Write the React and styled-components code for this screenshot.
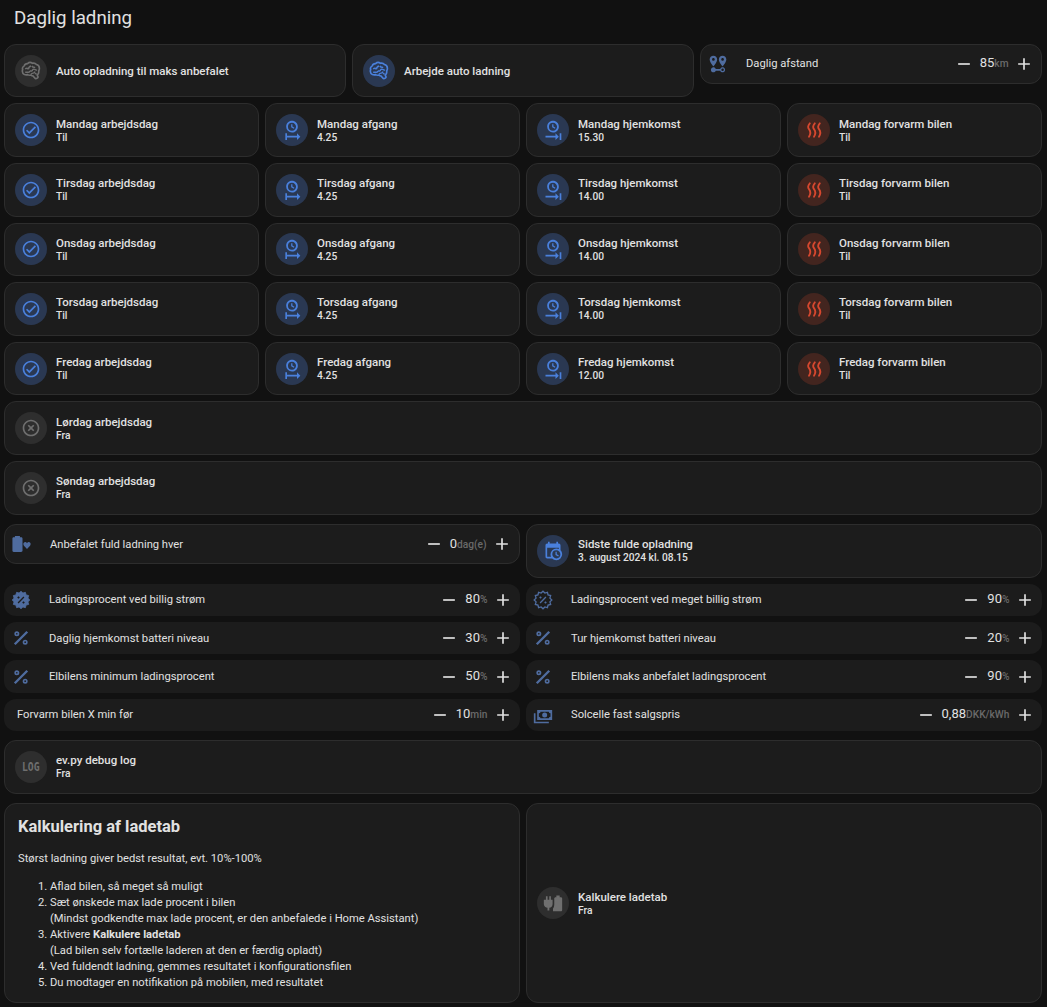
import React from 'react';
import styled, { createGlobalStyle } from 'styled-components';

const Global = createGlobalStyle`
  html, body { margin: 0; padding: 0; background: #111111; }
  body { font-family: Roboto, "Liberation Sans", sans-serif; color: #e1e1e1; }
`;

const P = {
  check: 'M12 2C6.5 2 2 6.5 2 12S6.5 22 12 22 22 17.5 22 12 17.5 2 12 2M12 20C7.59 20 4 16.41 4 12S7.59 4 12 4 20 7.59 20 12 16.41 20 12 20M16.59 7.58L10 14.17L7.41 11.59L6 13L10 17L18 9L16.59 7.58Z',
  close: 'M12,20C7.59,20 4,16.41 4,12C4,7.59 7.59,4 12,4C16.41,4 20,7.59 20,12C20,16.41 16.41,20 12,20M12,2C6.47,2 2,6.47 2,12C2,17.53 6.47,22 12,22C17.53,22 22,17.53 22,12C22,6.47 17.53,2 12,2M14.59,8L12,10.59L9.41,8L8,9.41L10.59,12L8,14.59L9.41,16L12,13.41L14.59,16L16,14.59L13.41,12L16,9.41L14.59,8Z',
  percent: 'M18.5,3.5L3.5,18.5L5.5,20.5L20.5,5.5M7,4A3,3 0 0,0 4,7A3,3 0 0,0 7,10A3,3 0 0,0 10,7A3,3 0 0,0 7,4M7,6A1,1 0 0,1 8,7A1,1 0 0,1 7,8A1,1 0 0,1 6,7A1,1 0 0,1 7,6M17,14A3,3 0 0,0 14,17A3,3 0 0,0 17,20A3,3 0 0,0 20,17A3,3 0 0,0 17,14M17,16A1,1 0 0,1 18,17A1,1 0 0,1 17,18A1,1 0 0,1 16,17A1,1 0 0,1 17,16Z',
  minus: 'M19,13H5V11H19V13Z',
  plus: 'M19,13H13V19H11V13H5V11H11V5H13V11H19V13Z',
  clockStart: 'M12,1C8.14,1 5,4.14 5,8A7,7 0 0,0 12,15C15.86,15 19,11.87 19,8C19,4.14 15.86,1 12,1M12,3.15C14.67,3.15 16.85,5.32 16.85,8C16.85,10.68 14.67,12.85 12,12.85A4.85,4.85 0 0,1 7.15,8A4.85,4.85 0 0,1 12,3.15M11,5V8.69L14.19,10.53L14.94,9.23L12.5,7.82V5M4,16V24H6V21H18V24L22,20L18,16V19H6V16',
  clockEnd: 'M12,1C8.14,1 5,4.14 5,8A7,7 0 0,0 12,15C15.86,15 19,11.87 19,8C19,4.14 15.86,1 12,1M12,3.15C14.67,3.15 16.85,5.32 16.85,8C16.85,10.68 14.67,12.85 12,12.85A4.85,4.85 0 0,1 7.15,8A4.85,4.85 0 0,1 12,3.15M11,5V8.69L14.19,10.53L14.94,9.23L12.5,7.82V5M15,16V19H3V21H15V24L19,20M20,16V24H22V16',
  calendar: 'M15,13H16.5V15.82L18.94,17.23L18.19,18.53L15,16.69V13M19,8H5V19H9.67C9.24,18.09 9,17.07 9,16A7,7 0 0,1 16,9C17.07,9 18.09,9.24 19,9.67V8M5,21C3.89,21 3,20.1 3,19V5C3,3.89 3.89,3 5,3H6V1H8V3H16V1H18V3H19A2,2 0 0,1 21,5V11.1C22.24,12.36 23,14.09 23,16A7,7 0 0,1 16,23C14.09,23 12.36,22.24 11.1,21H5M16,11.15A4.85,4.85 0 0,0 11.15,16C11.15,18.68 13.32,20.85 16,20.85A4.85,4.85 0 0,0 20.85,16C20.85,13.32 18.68,11.15 16,11.15Z',
  distance: 'M6.5,8.11C5.61,8.11 4.89,7.39 4.89,6.5A1.61,1.61 0 0,1 6.5,4.89C7.39,4.89 8.11,5.61 8.11,6.5V6.5A1.61,1.61 0 0,1 6.5,8.11M6.5,2C4,2 2,4 2,6.5C2,9.87 6.5,14.86 6.5,14.86C6.5,14.86 11,9.87 11,6.5C11,4 9,2 6.5,2M17.5,8.11A1.61,1.61 0 0,1 15.89,6.5C15.89,5.61 16.61,4.89 17.5,4.89C18.39,4.89 19.11,5.61 19.11,6.5A1.61,1.61 0 0,1 17.5,8.11M17.5,2C15,2 13,4 13,6.5C13,9.87 17.5,14.86 17.5,14.86C17.5,14.86 22,9.87 22,6.5C22,4 20,2 17.5,2M17.5,16C16.23,16 15.1,16.8 14.68,18H9.32C8.77,16.44 7.05,15.62 5.5,16.17C3.93,16.72 3.11,18.44 3.66,20C4.22,21.56 5.93,22.38 7.5,21.83C8.35,21.53 9,20.85 9.32,20H14.69C15.24,21.56 16.96,22.38 18.5,21.83C20.08,21.28 20.9,19.56 20.35,18C19.92,16.8 18.78,16 17.5,16M17.5,20.5A1.5,1.5 0 0,1 16,19A1.5,1.5 0 0,1 17.5,17.5A1.5,1.5 0 0,1 19,19A1.5,1.5 0 0,1 17.5,20.5Z',
  cash: 'M5,6H23V18H5V6M14,9A3,3 0 0,1 17,12A3,3 0 0,1 14,15A3,3 0 0,1 11,12A3,3 0 0,1 14,9M9,8A2,2 0 0,1 7,10V14A2,2 0 0,1 9,16H19A2,2 0 0,1 21,14V10A2,2 0 0,1 19,8H9M1,10H3V20H19V22H1V10Z',
};

const Svg = styled.svg`
  display: block;
  flex: none;
  width: ${p => p.$size || 20}px;
  height: ${p => p.$size || 20}px;
  fill: currentColor;
`;

const Mdi = ({ d, size }) => <Svg viewBox="0 0 24 24" $size={size}><path d={d} /></Svg>;

const Brain = () => (
  <Svg viewBox="0 0 24 24">
    <path fill="none" stroke="currentColor" strokeWidth="2" d="M21.33,12.91C21.42,14.46 20.71,15.95 19.44,16.86L20.21,18.35C20.44,18.8 20.47,19.33 20.27,19.8C20.08,20.27 19.69,20.64 19.21,20.8L18.42,21.05C18.25,21.11 18.06,21.14 17.88,21.14C17.37,21.14 16.89,20.91 16.56,20.5L14.44,18C13.55,17.85 12.71,17.47 12,16.9C11.5,17.05 11,17.13 10.5,17.13C9.62,17.13 8.74,16.86 8,16.34C7.47,16.5 6.93,16.57 6.38,16.56C5.59,16.57 4.81,16.41 4.08,16.11C2.65,15.47 1.7,14.07 1.65,12.5C1.57,11.78 1.69,11.05 2,10.39C1.71,9.64 1.68,8.82 1.93,8.06C2.3,7.11 3,6.32 3.87,5.82C4.45,4.13 6.08,3 7.87,3.12C9.47,1.62 11.92,1.46 13.7,2.75C14.12,2.64 14.56,2.58 15,2.58C16.36,2.55 17.65,3.15 18.5,4.22C20.54,4.75 22,6.57 22.08,8.69C22.13,9.8 21.83,10.89 21.22,11.82C21.29,12.18 21.33,12.54 21.33,12.91Z" />
    <path fill="none" stroke="currentColor" strokeWidth="1.7" d="M5,9.5C6.5,8.5 8,8.5 9,10M9,10C9,8 10,6.5 12,6M5,13.5H9C10,13.5 10.5,13 10.5,12M10.5,12H13.5M13,6C14,7.5 15,8 17,7.5M13.5,12C13.5,10 15,9.5 16.5,10M16.5,10C18,10.5 18.5,11 19,11.5M12,16C12.5,15 13,14.5 14.5,14.5C16,14.5 16.5,13.5 16.5,12.5M17,14.5L18.5,16" />
  </Svg>
);

const Heat = () => (
  <Svg viewBox="0 0 24 24">
    <path fill="none" stroke="currentColor" strokeWidth="2.2" strokeLinecap="round" d="M7,4C4.4,7 4.4,9 6,11C8.2,13.8 8.2,16.5 6,20M13,4C10.4,7 10.4,9 12,11C14.2,13.8 14.2,16.5 12,20M19,4C16.4,7 16.4,9 18,11C20.2,13.8 20.2,16.5 18,20" />
  </Svg>
);

const badge = (() => {
  const pts = [];
  const n = 12;
  for (let i = 0; i < n * 2; i++) {
    const a = (Math.PI * i) / n - Math.PI / 2;
    const r = i % 2 ? 8.6 : 10.6;
    pts.push(`${(12 + r * Math.cos(a)).toFixed(2)},${(12 + r * Math.sin(a)).toFixed(2)}`);
  }
  return pts.join(' ');
})();

const Sale = ({ outline }) => (
  <Svg viewBox="0 0 24 24">
    <polygon points={badge} fill={outline ? 'none' : 'currentColor'} stroke="currentColor" strokeWidth={outline ? 1.6 : 1} />
    <g stroke={outline ? 'currentColor' : '#1c1c1c'} fill={outline ? 'currentColor' : '#1c1c1c'}>
      <path strokeWidth="1.6" d="M8.5,15.5L15.5,8.5" fill="none" />
      <circle cx="9" cy="9" r="1" strokeWidth="0.6" />
      <circle cx="15" cy="15" r="1" strokeWidth="0.6" />
    </g>
  </Svg>
);

const BatteryHeart = () => (
  <Svg viewBox="0 0 24 24">
    <path d="M3.5,2.4H9.5V4H11C11.8,4 12.6,4.7 12.6,5.5V20.2C12.6,21 11.8,21.6 11,21.6H2C1.2,21.6 0.5,21 0.5,20.2V5.5C0.5,4.7 1.2,4 2,4H3.5Z" />
    <path d="M18,18L14.3,14C13,12.4 13.6,9.9 15.7,9.7C16.6,9.6 17.5,10.1 18,11C18.5,10.1 19.4,9.6 20.3,9.7C22.4,9.9 23,12.4 21.7,14Z" />
  </Svg>
);

const PlugBattery = () => (
  <Svg viewBox="0 0 24 24">
    <path d="M3.5,4H5.5V8H7.5V4H9.5V8H11.5V13.5C11.5,15.8 9.8,17.5 7.6,17.8V21H5.4V17.8C3.2,17.5 1,15.8 1,13.5V8H3.5Z" />
    <path d="M16,3H20V5H21.5C22.3,5 23,5.7 23,6.5V20.5C23,21.3 22.3,22 21.5,22H12V18.5C13,17.5 13.5,15.5 13.5,13.5V6.5C13.5,5.7 14.2,5 15,5H16Z" />
  </Svg>
);

const Page = styled.div`
  box-sizing: border-box;
  width: 1047px;
  height: 1007px;
  overflow: hidden;
  padding: 0 5px 0 4px;
  display: flex;
  flex-direction: column;
`;

const Title = styled.h1`
  margin: 0;
  height: 43.8px;
  flex: none;
  padding: 8px 0 0 10px;
  box-sizing: border-box;
  font-size: 18.7px;
  font-weight: 400;
  line-height: 21px;
  color: #e1e1e1;
`;

const Grid = styled.div`
  display: grid;
  grid-template-columns: repeat(${p => p.$cols}, 1fr);
  column-gap: 6px;
  row-gap: ${p => p.$gap ?? 6}px;
  margin-top: ${p => p.$before ?? 0}px;
  margin-bottom: ${p => p.$after ?? 6}px;
  align-items: start;
`;

const Stack = styled.div`
  display: flex;
  flex-direction: column;
  gap: 6px;
`;

const Card = styled.div`
  box-sizing: border-box;
  height: ${p => p.$h || 53.6}px;
  display: flex;
  align-items: center;
  gap: 9px;
  padding: 0 10px;
  background: #1c1c1c;
  border: 1px solid #2d2d2d;
  border-radius: 12px;
`;

const IconBadge = styled.div`
  width: 32px;
  height: 32px;
  flex: none;
  border-radius: 50%;
  display: flex;
  align-items: center;
  justify-content: center;
  background: ${p => p.$tone === 'blue' ? '#2a3852' : p.$tone === 'red' ? '#43251f' : '#2e2e2e'};
  color: ${p => p.$tone === 'blue' ? '#4a80dc' : p.$tone === 'red' ? '#d6482f' : '#6f6f6f'};
`;

const Texts = styled.div`
  display: flex;
  flex-direction: column;
  min-width: 0;
`;

const Primary = styled.div`
  font-size: 11.5px;
  line-height: 14px;
  font-weight: 500;
  color: #e1e1e1;
`;

const Secondary = styled.div`
  font-size: 10.2px;
  line-height: 13px;
  font-weight: 500;
  color: #e1e1e1;
`;

const LogText = styled.span`
  display: inline-block;
  font-family: "DejaVu Sans Mono", monospace;
  font-size: 13px;
  font-weight: 700;
  transform: scale(0.75, 1);
  color: #6f6f6f;
`;

const NumberRow = styled.div`
  box-sizing: border-box;
  height: ${p => p.$h || 32.4}px;
  display: flex;
  align-items: center;
  padding: 0 7.5px 0 ${p => p.$pad ?? 7}px;
  background: #1c1c1c;
  border-radius: 12px;
  border: ${p => p.$bordered ? '1px solid #2d2d2d' : 'none'};
`;

const RowIcon = styled.div`
  flex: none;
  width: 38px;
  color: #4f6c9f;
`;

const RowLabel = styled.div`
  flex: 1;
  font-size: 11.2px;
  color: #e1e1e1;
`;

const Stepper = styled.div`
  display: flex;
  align-items: center;
  color: #e1e1e1;
`;

const Value = styled.div`
  margin: 0 5px 0 6px;
  font-size: 13px;
  line-height: 16px;
  color: #e1e1e1;
`;

const Unit = styled.span`
  font-size: 10.2px;
  color: #6a6a6a;
  font-weight: 500;
`;

const Markdown = styled.div`
  box-sizing: border-box;
  height: 200px;
  padding: 13px;
  background: #1c1c1c;
  border: 1px solid #2d2d2d;
  border-radius: 12px;
  font-size: 11.2px;
  line-height: 16px;
  color: #e1e1e1;
`;

const MdTitle = styled.h2`
  margin: 0 0 14px;
  font-size: 16.5px;
  line-height: 20px;
  font-weight: 700;
  color: #e1e1e1;
`;

const MdPara = styled.p`
  margin: 0 0 12px;
`;

const MdList = styled.ol`
  margin: 0;
  padding-left: 32px;
`;

const Entity = ({ icon, tone, name, state, h }) => (
  <Card $h={h}>
    <IconBadge $tone={tone}>{icon}</IconBadge>
    <Texts>
      <Primary>{name}</Primary>
      {state && <Secondary>{state}</Secondary>}
    </Texts>
  </Card>
);

const Num = ({ icon, label, value, unit, pad, bordered, h }) => (
  <NumberRow $pad={pad} $bordered={bordered} $h={h}>
    {icon && <RowIcon>{icon}</RowIcon>}
    <RowLabel>{label}</RowLabel>
    <Stepper>
      <Mdi d={P.minus} />
      <Value>{value}<Unit>{unit}</Unit></Value>
      <Mdi d={P.plus} />
    </Stepper>
  </NumberRow>
);

const days = [
  ['Mandag', '4.25', '15.30'],
  ['Tirsdag', '4.25', '14.00'],
  ['Onsdag', '4.25', '14.00'],
  ['Torsdag', '4.25', '14.00'],
  ['Fredag', '4.25', '12.00'],
];

export default function App() {
  return (
    <Page>
      <Global />
      <Title>Daglig ladning</Title>
      <Grid $cols={3}>
        <Entity icon={<Brain />} name="Auto opladning til maks anbefalet" />
        <Entity icon={<Brain />} tone="blue" name="Arbejde auto ladning" />
        <Num bordered h={40.4} pad={7} icon={<Mdi d={P.distance} />} label="Daglig afstand" value="85" unit="km" />
      </Grid>
      <Grid $cols={4}>
        {days.flatMap(([d, dep, home]) => [
          <Entity key={d + 1} icon={<Mdi d={P.check} />} tone="blue" name={`${d} arbejdsdag`} state="Til" />,
          <Entity key={d + 2} icon={<Mdi d={P.clockStart} />} tone="blue" name={`${d} afgang`} state={dep} />,
          <Entity key={d + 3} icon={<Mdi d={P.clockEnd} />} tone="blue" name={`${d} hjemkomst`} state={home} />,
          <Entity key={d + 4} icon={<Heat />} tone="red" name={`${d} forvarm bilen`} state="Til" />,
        ])}
      </Grid>
      <Stack>
        <Entity icon={<Mdi d={P.close} />} name="Lørdag arbejdsdag" state="Fra" />
        <Entity icon={<Mdi d={P.close} />} name="Søndag arbejdsdag" state="Fra" />
      </Stack>
      <Grid $cols={2} $before={9.4}>
        <Num bordered h={40.4} pad={7} icon={<BatteryHeart />} label="Anbefalet fuld ladning hver" value="0" unit="dag(e)" />
        <Entity icon={<Mdi d={P.calendar} />} tone="blue" name="Sidste fulde opladning" state="3. august 2024 kl. 08.15" />
      </Grid>
      <Grid $cols={2} $after={9}>
        <Num icon={<Sale />} label="Ladingsprocent ved billig strøm" value="80" unit="%" />
        <Num icon={<Sale outline />} label="Ladingsprocent ved meget billig strøm" value="90" unit="%" />
        <Num icon={<Mdi d={P.percent} />} label="Daglig hjemkomst batteri niveau" value="30" unit="%" />
        <Num icon={<Mdi d={P.percent} />} label="Tur hjemkomst batteri niveau" value="20" unit="%" />
        <Num icon={<Mdi d={P.percent} />} label="Elbilens minimum ladingsprocent" value="50" unit="%" />
        <Num icon={<Mdi d={P.percent} />} label="Elbilens maks anbefalet ladingsprocent" value="90" unit="%" />
        <Num pad={13} label="Forvarm bilen X min før" value="10" unit="min" />
        <Num icon={<Mdi d={P.cash} />} label="Solcelle fast salgspris" value="0,88" unit="DKK/kWh" />
      </Grid>
      <Stack>
        <Entity icon={<LogText>LOG</LogText>} name="ev.py debug log" state="Fra" />
      </Stack>
      <Grid $cols={2} $before={9.4} $after={0}>
        <Markdown>
          <MdTitle>Kalkulering af ladetab</MdTitle>
          <MdPara>Størst ladning giver bedst resultat, evt. 10%-100%</MdPara>
          <MdList>
            <li>Aflad bilen, så meget så muligt</li>
            <li>Sæt ønskede max lade procent i bilen<br />(Mindst godkendte max lade procent, er den anbefalede i Home Assistant)</li>
            <li>Aktivere <b>Kalkulere ladetab</b><br />(Lad bilen selv fortælle laderen at den er færdig opladt)</li>
            <li>Ved fuldendt ladning, gemmes resultatet i konfigurationsfilen</li>
            <li>Du modtager en notifikation på mobilen, med resultatet</li>
          </MdList>
        </Markdown>
        <Entity h={200} icon={<PlugBattery />} name="Kalkulere ladetab" state="Fra" />
      </Grid>
    </Page>
  );
}
